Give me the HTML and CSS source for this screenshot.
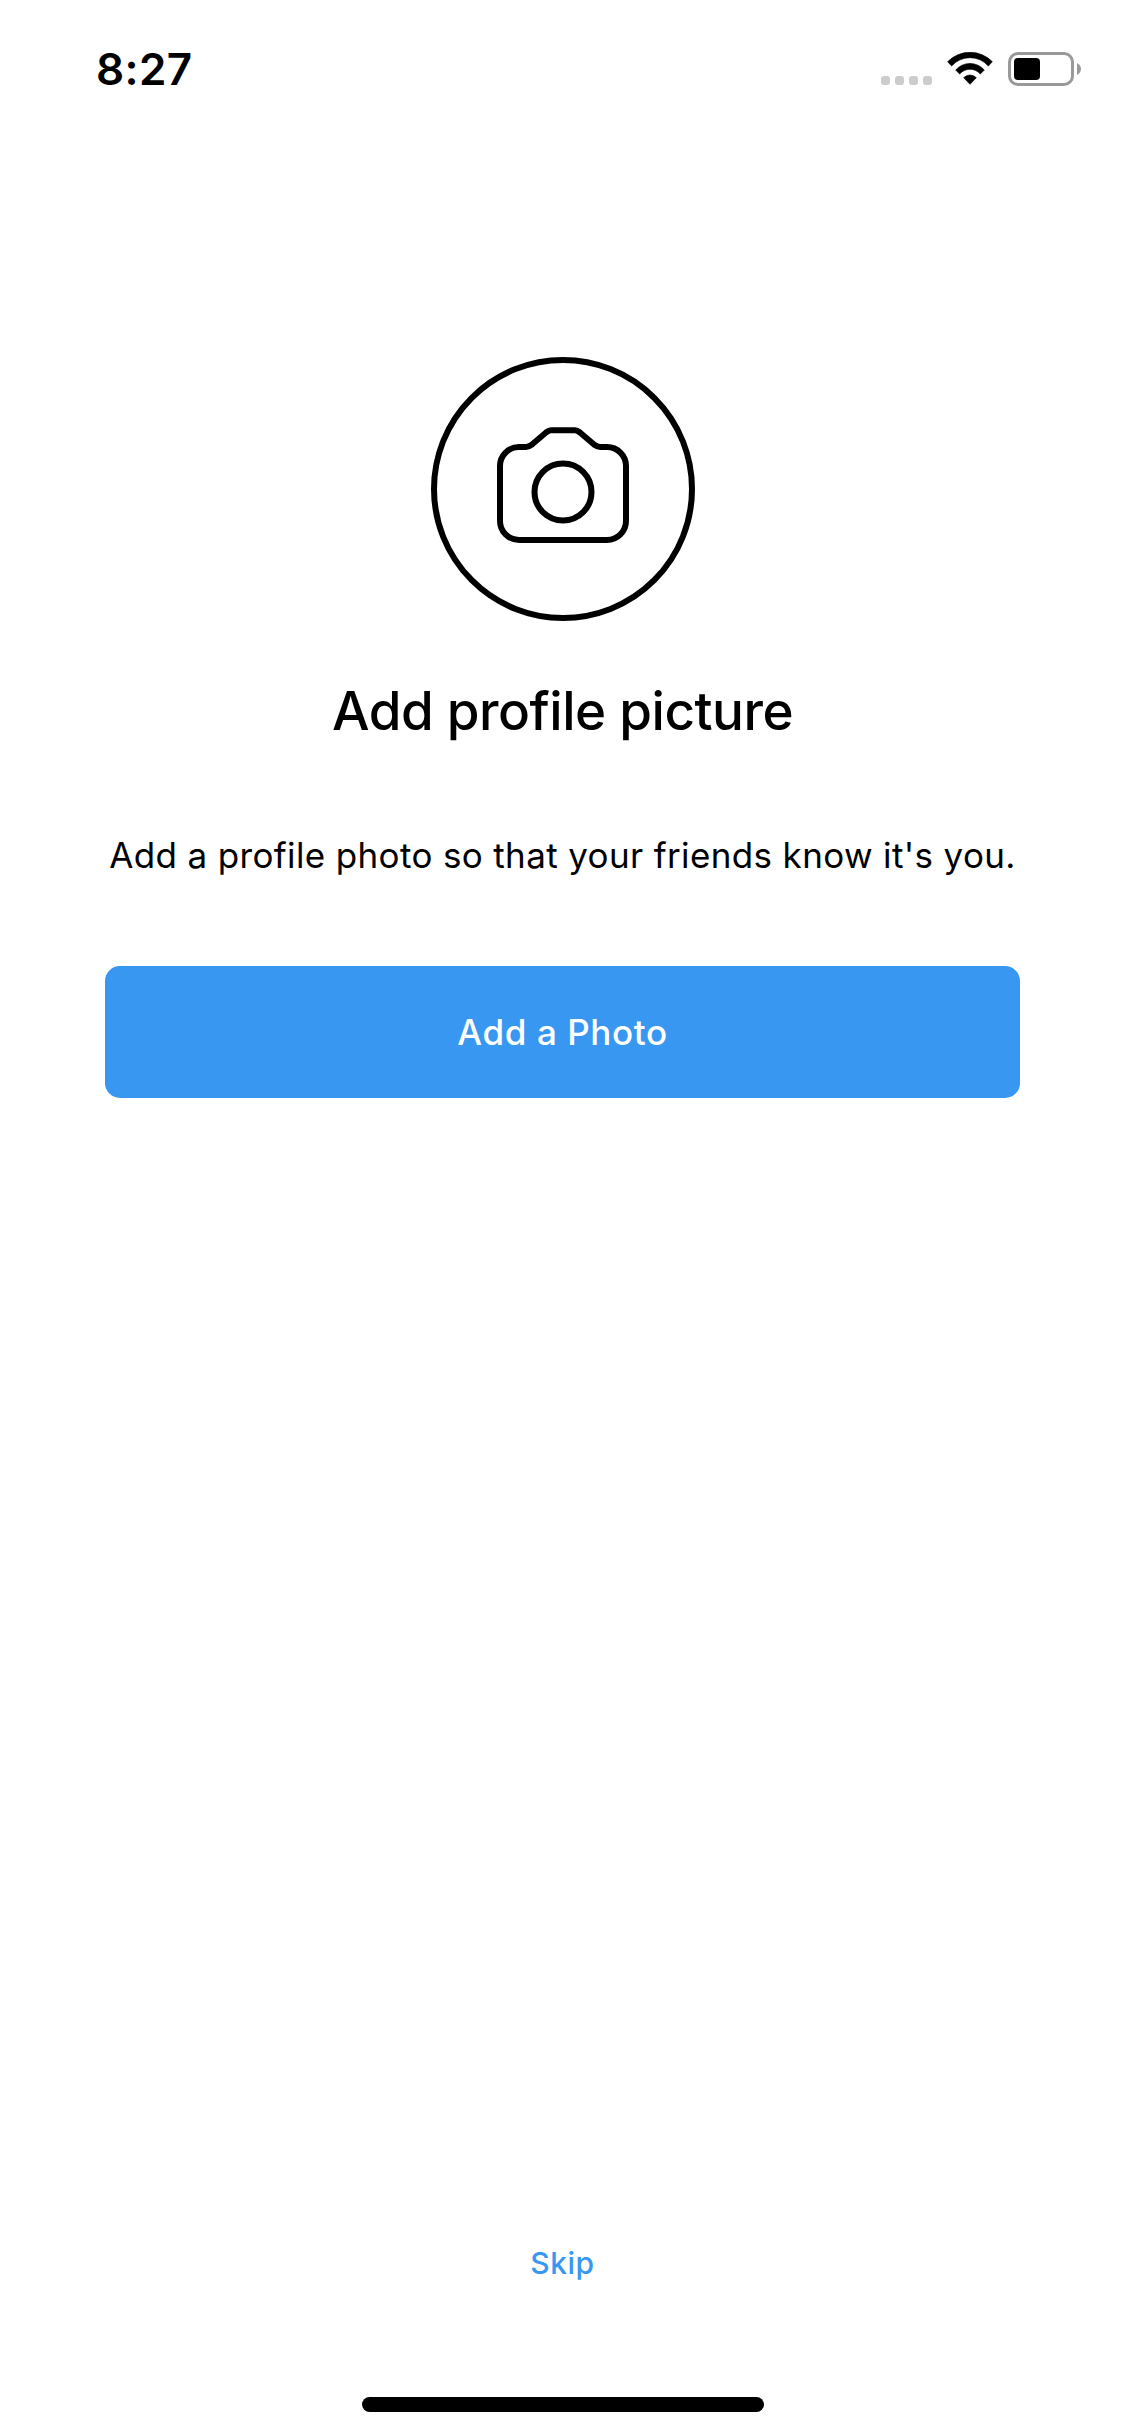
FILE: index.html
```html
<!DOCTYPE html>
<html lang="en">
<head>
    <meta charset="UTF-8">
    <meta name="viewport" content="width=device-width, initial-scale=1.0">
    <title>Add profile picture</title>
    <link rel="stylesheet" href="styles.css">
</head>
<body>
    <div class="screen">
        <header class="status-bar">
            <span class="time">8:27</span>
            <div class="status-icons">
                <div class="signal">
                    <i></i><i></i><i></i><i></i>
                </div>
                <svg class="wifi" viewBox="0 0 136 99">
                    <path d="M1 29A94 94 0 0 1 135 29L123 42A73 73 0 0 0 13 42Z"/>
                    <path d="M25 54A57 57 0 0 1 111 54L99 66A41 41 0 0 0 37 66Z"/>
                    <path d="M49 77A27 27 0 0 1 87 77L68 97Z"/>
                </svg>
                <svg class="battery" viewBox="0 0 74 34">
                    <rect x="1.5" y="1.5" width="63" height="31" rx="8.5" fill="none" stroke="#999" stroke-width="3"/>
                    <rect x="6" y="6" width="26" height="22" rx="4"/>
                    <path d="M69 11C74.3 13.5 74.3 20.5 69 23Z" fill="#999"/>
                </svg>
            </div>
        </header>
        <main class="content">
            <svg class="camera" viewBox="0 0 264 264">
                <circle cx="132" cy="132" r="129"/>
                <path d="M88 90H95C98 90 99 89 101 87.500L115 75.500C117 74 118 73.300 120 73.300H144C146 73.300 147 74 149 75.500L163 87.500C165 89 166 90 169 90H176A19 19 0 0 1 195 109V164A19 19 0 0 1 176 183H88A19 19 0 0 1 69 164V109A19 19 0 0 1 88 90Z"/>
                <circle cx="132" cy="135" r="28.500"/>
            </svg>
            <h1>Add profile picture</h1>
            <p>Add a profile photo so that your friends know it's you.</p>
            <button class="add-btn">Add a Photo</button>
        </main>
        <button class="skip-btn">Skip</button>
        <div class="home-indicator"></div>
    </div>
</body>
</html>
```

FILE: styles.css
```css
* {
    box-sizing: border-box;
}
body {
    margin: 0;
    background-color: #fff;
    color: #000;
    font-family: Inter, "Liberation Sans", sans-serif;
}
button {
    border: none;
    padding: 0;
    font-family: inherit;
    cursor: pointer;
}
.screen {
    display: flex;
    flex-direction: column;
    align-items: center;
    width: 1125px;
    height: 2436px;
    padding-bottom: 24px;
}
.status-bar {
    display: flex;
    justify-content: space-between;
    align-items: center;
    width: 100%;
    height: 138px;
    padding: 0 43px 0 96px;
}
.time {
    font-size: 44px;
    font-weight: 600;
    letter-spacing: 0.4px;
}
.status-icons {
    display: flex;
    align-items: flex-end;
    height: 34px;
}
.signal {
    display: flex;
    gap: 5px;
    margin: 0 15px 1px 0;
}
.signal i {
    width: 9px;
    height: 9px;
    border-radius: 3px;
    background-color: #ccc;
}
.wifi {
    width: 46px;
    height: 33px;
    margin: 0 15px 1px 0;
}
.wifi path {
    stroke: #000;
    stroke-width: 2;
    stroke-linejoin: round;
}
.battery {
    width: 74px;
    height: 34px;
}
.content {
    display: flex;
    flex-direction: column;
    align-items: center;
    width: 100%;
    padding: 219px 105px 0;
}
.camera {
    width: 264px;
    height: 264px;
    fill: none;
    stroke: #000;
    stroke-width: 6;
    margin-left: 1px;
}
h1 {
    margin: 59px 0 0;
    font-size: 53px;
    font-weight: 500;
    line-height: 62px;
    letter-spacing: -0.5px;
    white-space: nowrap;
}
p {
    margin: 91px 0 0;
    font-size: 35px;
    line-height: 44px;
    letter-spacing: 0.36px;
    white-space: nowrap;
}
.add-btn {
    width: 915px;
    height: 132px;
    margin-top: 89px;
    border-radius: 15px;
    background-color: #3897f0;
    color: #fff;
    font-size: 35px;
    font-weight: 500;
    letter-spacing: 0.6px;
}
.skip-btn {
    margin: auto 0 116px;
    background: none;
    color: #3897f0;
    font-size: 30px;
    font-weight: 500;
    line-height: 36px;
    letter-spacing: 0.5px;
}
.home-indicator {
    width: 402px;
    height: 15px;
    margin-left: 1px;
    border-radius: 8px;
    background-color: #000;
}
```
